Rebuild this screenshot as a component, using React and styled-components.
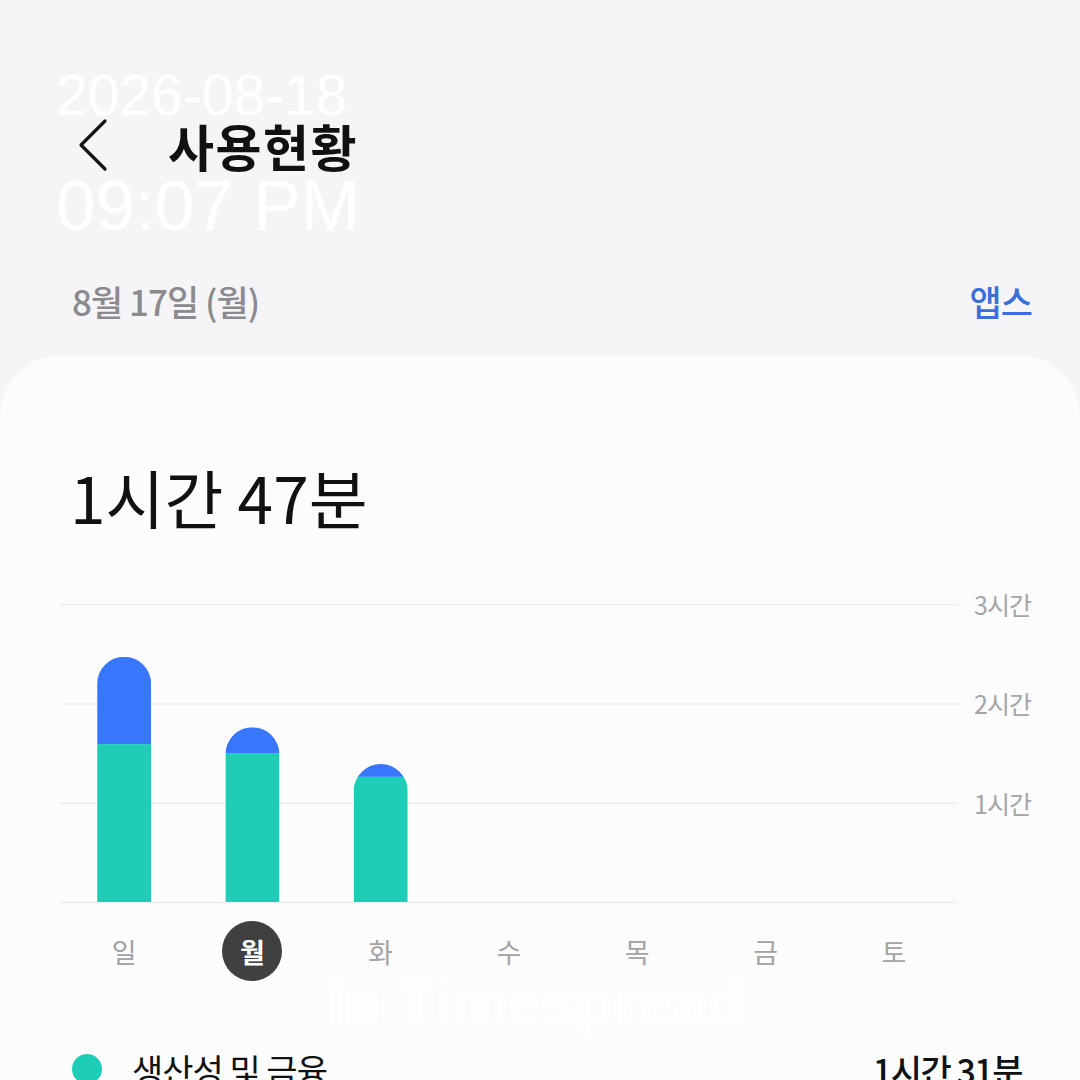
import styled, { createGlobalStyle } from 'styled-components';

const GlobalStyle = createGlobalStyle`
    * { box-sizing: border-box; }
    html, body { margin: 0; padding: 0; }
    body {
        background: #f5f5f7;
        font-family: "Noto Sans CJK KR", "Noto Sans", sans-serif;
    }
`;

const HOUR = 99.3;
const PLOT_H = 298;
const COL_W = 898 / 7;
const BAR_W = 54;

const days = [
    { label: '일', total: 2.47, green: 1.59 },
    { label: '월', total: 1.76, green: 1.5, selected: true },
    { label: '화', total: 1.39, green: 1.26 },
    { label: '수' },
    { label: '목' },
    { label: '금' },
    { label: '토' },
];

function Bar({ index, total, green }) {
    const x = index * COL_W + (COL_W - BAR_W) / 2;
    const top = PLOT_H - total * HOUR;
    const split = PLOT_H - green * HOUR;
    const r = BAR_W / 2;
    const id = `bar-clip-${index}`;
    return (
        <g>
            <clipPath id={id}>
                <path d={`M${x},${PLOT_H} V${top + r} A${r},${r} 0 0 1 ${x + BAR_W},${top + r} V${PLOT_H} Z`} />
            </clipPath>
            <g clipPath={`url(#${id})`}>
                <rect x={x} y={top} width={BAR_W} height={split - top} fill="#3877fb" />
                <rect x={x} y={split} width={BAR_W} height={PLOT_H - split} fill="#1ecdb6" />
            </g>
        </g>
    );
}

export default function App() {
    return (
        <Page>
            <GlobalStyle />
            <Header>
                <BackButton aria-label="back">
                    <svg width="34" height="54" viewBox="0 0 34 54">
                        <path d="M29 3 L5 27 L29 51" fill="none" stroke="#141414" strokeWidth="3.2" strokeLinecap="round" strokeLinejoin="round" />
                    </svg>
                </BackButton>
                <Title>사용현황</Title>
            </Header>
            <DateRow>
                <DateText>8월 17일 (월)</DateText>
                <AppsLink>앱스</AppsLink>
            </DateRow>
            <Card>
                <Total>1시간 47분</Total>
                <ChartRow>
                    <Plot width="898" height={PLOT_H + 2} viewBox={`0 0 898 ${PLOT_H + 2}`}>
                        {[0, 1, 2, 3].map((h) => (
                            <line key={h} x1="0" x2="898" y1={PLOT_H - h * HOUR + 0.5} y2={PLOT_H - h * HOUR + 0.5} stroke="#ececee" strokeWidth="1.5" />
                        ))}
                        {days.map((d, i) => (d.total ? <Bar key={d.label} index={i} total={d.total} green={d.green} /> : null))}
                    </Plot>
                    <Axis>
                        <AxisLabel>3시간</AxisLabel>
                        <AxisLabel>2시간</AxisLabel>
                        <AxisLabel>1시간</AxisLabel>
                    </Axis>
                </ChartRow>
                <DayRow>
                    {days.map((d) => (
                        <DayCell key={d.label}>
                            <DayLabel selected={d.selected}>{d.label}</DayLabel>
                        </DayCell>
                    ))}
                </DayRow>
                <CategoryRow>
                    <CategoryName>
                        <Dot />
                        생산성 및 금융
                    </CategoryName>
                    <CategoryTime>1시간 31분</CategoryTime>
                </CategoryRow>
            </Card>
            <Stamp>
                <StampDate>2026-08-18</StampDate>
                <StampTime>09:07 PM</StampTime>
            </Stamp>
            <Watermark>
                <svg width="48" height="46" viewBox="0 0 48 46">
                    <rect x="0" y="0" width="12" height="10" rx="2" fill="#ffffff" />
                    <rect x="0" y="14" width="12" height="32" rx="2" fill="#ffffff" />
                    <rect x="16" y="14" width="32" height="32" rx="3" fill="#ffffff" />
                </svg>
                Timespread
            </Watermark>
        </Page>
    );
}

const Page = styled.div`
    position: relative;
    width: 1080px;
    height: 1080px;
    overflow: hidden;
    background: #f5f5f7;
    padding-top: 100px;
`;

const Header = styled.div`
    height: 90px;
    display: flex;
    align-items: center;
    padding-left: 76px;
`;

const BackButton = styled.div`
    width: 92px;
    display: flex;
    align-items: center;
`;

const Title = styled.h1`
    margin: 0;
    font-size: 50px;
    font-weight: 700;
    letter-spacing: 1.5px;
    color: #111;
`;

const DateRow = styled.div`
    margin-top: 80px;
    height: 60px;
    display: flex;
    align-items: center;
    justify-content: space-between;
    padding: 0 48px 0 72px;
`;

const DateText = styled.span`
    font-size: 35px;
    font-weight: 500;
    color: #8b8b8f;
    letter-spacing: -1px;
`;

const AppsLink = styled.span`
    font-size: 35px;
    font-weight: 500;
    color: #3a6fd9;
    letter-spacing: -1px;
`;

const Card = styled.div`
    margin-top: 25px;
    height: 800px;
    background: #fcfcfc;
    border-radius: 62px 62px 0 0;
    padding: 91px 58px 0 60px;
`;

const Total = styled.div`
    height: 100px;
    display: flex;
    align-items: center;
    padding-left: 10px;
    font-size: 64px;
    font-weight: 400;
    color: #111;
    letter-spacing: 0;
`;

const ChartRow = styled.div`
    margin-top: 58px;
    display: flex;
    align-items: flex-start;
`;

const Plot = styled.svg`
    display: block;
    flex: none;
`;

const Axis = styled.div`
    margin-top: -14px;
    margin-left: 16px;
    display: flex;
    flex-direction: column;
`;

const AxisLabel = styled.span`
    height: ${HOUR}px;
    line-height: 28px;
    font-size: 25px;
    color: #a5a5a8;
    letter-spacing: -1px;
    white-space: nowrap;
`;

const DayRow = styled.div`
    width: 898px;
    margin-top: 17px;
    display: grid;
    grid-template-columns: repeat(7, 1fr);
`;

const DayCell = styled.div`
    display: flex;
    justify-content: center;
`;

const DayLabel = styled.span`
    width: 60px;
    height: 60px;
    border-radius: 50%;
    display: flex;
    align-items: center;
    justify-content: center;
    font-size: 27px;
    font-weight: ${({ selected }) => (selected ? 700 : 400)};
    color: ${({ selected }) => (selected ? '#ffffff' : '#a3a3a6')};
    background: ${({ selected }) => (selected ? '#404040' : 'transparent')};
`;

const CategoryRow = styled.div`
    margin-top: 58px;
    height: 60px;
    display: flex;
    align-items: center;
    justify-content: space-between;
    padding-left: 12px;
`;

const CategoryName = styled.div`
    display: flex;
    align-items: center;
    gap: 30px;
    font-size: 34px;
    color: #111;
    letter-spacing: -1px;
`;

const Dot = styled.span`
    width: 30px;
    height: 30px;
    border-radius: 50%;
    background: #1ecdb6;
`;

const CategoryTime = styled.span`
    font-size: 34px;
    font-weight: 500;
    color: #111;
    letter-spacing: -1.5px;
`;

const Stamp = styled.div`
    position: absolute;
    left: 56px;
    top: 67px;
    display: flex;
    flex-direction: column;
    font-family: "Liberation Sans", Arial, sans-serif;
    color: rgba(255, 255, 255, 0.92);
    line-height: 1;
`;

const StampDate = styled.span`
    font-size: 57px;
`;

const StampTime = styled.span`
    margin-top: 46px;
    font-size: 71px;
`;

const Watermark = styled.div`
    position: absolute;
    left: 330px;
    top: 966px;
    display: flex;
    align-items: center;
    gap: 20px;
    font-family: "Liberation Sans", Arial, sans-serif;
    font-weight: 700;
    font-size: 62px;
    color: #ffffff;
    opacity: 0.85;
`;
